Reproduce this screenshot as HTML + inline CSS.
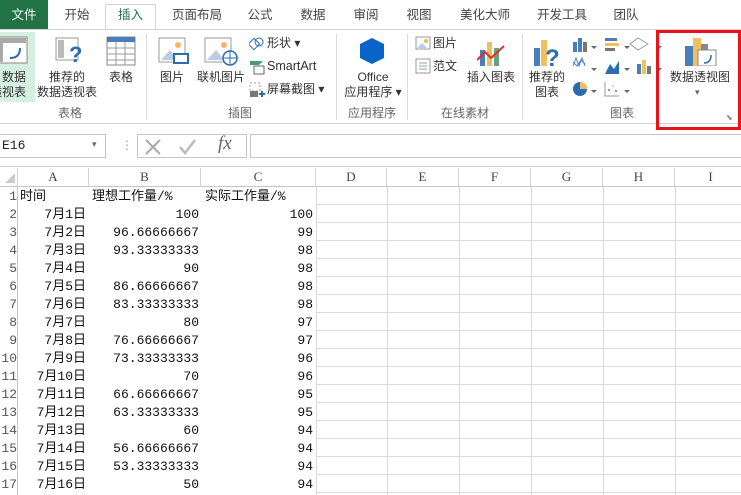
<!DOCTYPE html>
<html><head><meta charset="utf-8"><style>
*{margin:0;padding:0;box-sizing:border-box}
body{width:741px;height:495px;overflow:hidden;background:#fff;font-family:"Liberation Sans","Noto Sans CJK SC",sans-serif;font-size:12px;color:#444;position:relative}
.a{position:absolute}
.tab{position:absolute;top:0;height:29px;line-height:30px;font-size:12.5px;color:#444;text-align:center}
.lbl{position:absolute;font-size:12px;color:#333;text-align:center;line-height:15px;white-space:nowrap}
.grp{position:absolute;top:104px;font-size:12px;color:#666;text-align:center}
.sep{position:absolute;top:34px;width:1px;height:86px;background:#dadada}
.cell{position:absolute;font-family:"Liberation Mono","Noto Sans CJK SC",monospace;font-size:13px;color:#111;height:18px;line-height:18px;white-space:nowrap}
.rh{position:absolute;left:0;width:17px;font-family:"Liberation Mono",monospace;font-size:13px;color:#555;height:18px;line-height:18px;overflow:hidden;text-align:right;direction:rtl}
.ch{position:absolute;top:168px;height:18px;line-height:18px;text-align:center;font-family:"Liberation Serif",serif;font-size:13px;color:#444;border-right:1px solid #d4d4d4}
</style></head><body>
<div class="a" style="left:0;top:0;width:48px;height:29px;background:#217346"></div>
<div class="tab" style="left:0;width:48px;color:#fff">文件</div>
<div class="tab" style="left:52px;width:50px">开始</div>
<div class="a" style="left:105px;top:4px;width:51px;height:26px;border:1px solid #d4d4d4;border-bottom:none;background:#fff"></div>
<div class="tab" style="left:105px;width:51px;color:#217346">插入</div>
<div class="tab" style="left:162px;width:70px">页面布局</div>
<div class="tab" style="left:240px;width:40px">公式</div>
<div class="tab" style="left:292px;width:42px">数据</div>
<div class="tab" style="left:345px;width:42px">审阅</div>
<div class="tab" style="left:398px;width:42px">视图</div>
<div class="tab" style="left:455px;width:60px">美化大师</div>
<div class="tab" style="left:532px;width:60px">开发工具</div>
<div class="tab" style="left:606px;width:40px">团队</div>
<div class="a" style="left:0;top:29px;width:741px;height:1px;background:#d4d4d4"></div>
<div class="a" style="left:0;top:123px;width:741px;height:1px;background:#d4d4d4"></div>
<div class="a" style="left:0;top:32px;width:35px;height:70px;background:#d5efe1"></div>
<svg class="a" style="left:0;top:36px" width="28" height="28"><rect x="-4" y="1" width="31" height="26" fill="#fff" stroke="#888"/><rect x="-3" y="2" width="6" height="24" fill="#aaa"/><rect x="-3" y="2" width="29" height="5" fill="#aaa"/><path d="M10 22 q10 0 10-10" stroke="#2b6cb0" fill="none" stroke-width="2"/></svg>
<div class="lbl" style="left:-10px;top:70px;width:50px;text-align:left;padding-left:12px">数据<br><span style="margin-left:-12px">透视表</span></div>
<svg class="a" style="left:55px;top:36px" width="28" height="30"><rect x="1" y="2" width="22" height="22" fill="#fff" stroke="#999"/><rect x="3" y="4" width="6" height="18" fill="#bbb"/><text x="14" y="26" font-size="22" font-weight="bold" fill="#2b6cb0" font-family="Liberation Sans">?</text></svg>
<div class="lbl" style="left:36px;top:70px;width:62px">推荐的<br>数据透视表</div>
<svg class="a" style="left:106px;top:36px" width="30" height="30"><rect x="1" y="1" width="28" height="28" fill="#fff" stroke="#888"/><rect x="1" y="1" width="28" height="5" fill="#4a7ebb"/><path d="M1 12H29M1 18H29M1 24H29M10 6V29M19 6V29" stroke="#999"/></svg>
<div class="lbl" style="left:104px;top:70px;width:34px">表格</div>
<div class="grp" style="left:40px;width:60px">表格</div>
<div class="sep" style="left:146px"></div>
<svg class="a" style="left:158px;top:36px" width="32" height="30"><rect x="1" y="2" width="26" height="24" fill="#fff" stroke="#999"/><path d="M3 24 L12 14 L20 24Z" fill="#b9cde5"/><circle cx="20" cy="9" r="3" fill="#f0b860"/><rect x="16" y="18" width="14" height="9" fill="#fff" stroke="#2b6cb0" stroke-width="2"/></svg>
<div class="lbl" style="left:155px;top:70px;width:34px">图片</div>
<svg class="a" style="left:204px;top:36px" width="34" height="30"><rect x="1" y="2" width="26" height="24" fill="#fff" stroke="#999"/><path d="M3 24 L12 14 L20 24Z" fill="#b9cde5"/><circle cx="20" cy="9" r="3" fill="#f0b860"/><circle cx="26" cy="22" r="7" fill="#fff" stroke="#2b6cb0" stroke-width="1.5"/><path d="M19 22H33M26 15V29" stroke="#2b6cb0"/></svg>
<div class="lbl" style="left:193px;top:70px;width:56px">联机图片</div>
<svg class="a" style="left:249px;top:36px" width="16" height="14"><rect x="1" y="4" width="8" height="8" fill="none" stroke="#2b6cb0" transform="rotate(45 5 8)"/><circle cx="10" cy="6" r="4" fill="none" stroke="#2b6cb0"/></svg>
<div class="lbl" style="left:267px;top:36px;text-align:left">形状 ▾</div>
<svg class="a" style="left:249px;top:59px" width="16" height="16"><path d="M1 2H14L10 6H1Z" fill="#4a9a7a"/><rect x="5" y="7" width="10" height="8" fill="#fff" stroke="#666"/></svg>
<div class="lbl" style="left:267px;top:59px;text-align:left;font-size:12.5px">SmartArt</div>
<svg class="a" style="left:249px;top:82px" width="16" height="16"><rect x="1" y="1" width="10" height="8" fill="none" stroke="#999" stroke-dasharray="2 2"/><rect x="1" y="9" width="8" height="6" fill="#777"/><path d="M10 12H16M13 9V15" stroke="#2b6cb0" stroke-width="2"/></svg>
<div class="lbl" style="left:267px;top:82px;text-align:left">屏幕截图 ▾</div>
<div class="grp" style="left:220px;width:40px">插图</div>
<div class="sep" style="left:336px"></div>
<svg class="a" style="left:358px;top:36px" width="28" height="30"><path d="M14 2 L26 8 V22 L14 28 L2 22 V8Z" fill="#0a64c8"/></svg>
<div class="lbl" style="left:340px;top:70px;width:66px">Office<br>应用程序 ▾</div>
<div class="grp" style="left:340px;width:64px">应用程序</div>
<div class="sep" style="left:407px"></div>
<svg class="a" style="left:415px;top:36px" width="16" height="14"><rect x="1" y="1" width="14" height="12" fill="#fff" stroke="#999"/><path d="M2 12 L7 7 L12 12Z" fill="#b9cde5"/><circle cx="11" cy="5" r="2" fill="#f0b860"/></svg>
<div class="lbl" style="left:433px;top:36px;text-align:left">图片</div>
<svg class="a" style="left:415px;top:58px" width="16" height="16"><rect x="1" y="1" width="14" height="14" fill="#fff" stroke="#999"/><path d="M4 5H12M4 8H12M4 11H12" stroke="#8aa"/></svg>
<div class="lbl" style="left:433px;top:59px;text-align:left">范文</div>
<svg class="a" style="left:477px;top:40px" width="28" height="26"><rect x="3" y="10" width="5" height="16" fill="#4a7ebb"/><rect x="10" y="2" width="5" height="24" fill="#f0c060"/><rect x="17" y="8" width="5" height="18" fill="#6aa080"/><path d="M0 20 L8 12 L14 18 L27 6" stroke="#e03020" stroke-width="2" fill="none"/></svg>
<div class="lbl" style="left:462px;top:70px;width:58px">插入图表</div>
<div class="grp" style="left:435px;width:60px">在线素材</div>
<div class="sep" style="left:522px"></div>
<svg class="a" style="left:533px;top:38px" width="30" height="30"><rect x="1" y="10" width="6" height="18" fill="#4a7ebb"/><rect x="8" y="2" width="6" height="26" fill="#f0c060"/><text x="12" y="28" font-size="24" font-weight="bold" fill="#2b6cb0" font-family="Liberation Sans">?</text></svg>
<div class="lbl" style="left:527px;top:70px;width:40px">推荐的<br>图表</div>
<svg class="a" style="left:572px;top:36px" width="90" height="62">
<rect x="1" y="6" width="4" height="10" fill="#4a7ebb"/><rect x="6" y="2" width="4" height="14" fill="#4a7ebb"/><rect x="11" y="6" width="4" height="10" fill="#777"/>
<path d="M19 10l3 3 3-3z" fill="#666"/>
<rect x="33" y="2" width="12" height="3" fill="#4a7ebb"/><rect x="33" y="7" width="14" height="3" fill="#f0c060"/><rect x="33" y="12" width="10" height="3" fill="#777"/>
<path d="M52 10l3 3 3-3z" fill="#666"/>
<path d="M66 2l10 6-10 6-8-6z" fill="none" stroke="#999"/><path d="M84 10l3 3 3-3z" fill="#666"/>
<path d="M1 30l3-8 3 8 3-8 3 8" stroke="#4a7ebb" fill="none"/><path d="M1 26l4 4 4-6 4 4" stroke="#4a7ebb" fill="none"/>
<path d="M19 32l3 3 3-3z" fill="#666"/>
<path d="M33 38l5-10 4 5 5-8 V38Z" fill="#2b6cb0"/><path d="M52 32l3 3 3-3z" fill="#666"/>
<rect x="65" y="28" width="4" height="10" fill="#4a7ebb"/><rect x="70" y="24" width="4" height="14" fill="#f0c060"/><rect x="75" y="30" width="4" height="8" fill="#777"/><path d="M84 32l3 3 3-3z" fill="#666"/>
<circle cx="8" cy="53" r="7" fill="#2b6cb0"/><path d="M8 53V46A7 7 0 0 1 15 53Z" fill="#f0c060"/><path d="M19 54l3 3 3-3z" fill="#666"/>
<path d="M33 46V60H47" stroke="#999" fill="none"/><circle cx="37" cy="54" r="1" fill="#4a7ebb"/><circle cx="41" cy="50" r="1" fill="#f0c060"/><circle cx="44" cy="55" r="1" fill="#4a7ebb"/><path d="M52 54l3 3 3-3z" fill="#666"/>
</svg>
<div class="grp" style="left:602px;width:40px">图表</div>
<svg class="a" style="left:684px;top:36px" width="34" height="30"><rect x="1" y="10" width="8" height="20" fill="#4a7ebb"/><rect x="9" y="2" width="8" height="28" fill="#f0c060"/><rect x="17" y="8" width="7" height="8" fill="#888"/><rect x="14" y="14" width="18" height="16" fill="#fff" stroke="#888"/><path d="M20 27q7 0 7-8" stroke="#2b6cb0" fill="none" stroke-width="1.5"/></svg>
<div class="lbl" style="left:664px;top:70px;width:72px">数据透视图</div>
<div class="lbl" style="left:695px;top:85px;font-size:9px;color:#666">▾</div>
<div class="lbl" style="left:726px;top:110px;font-size:8px;color:#888">⬊</div>
<div class="a" style="left:656px;top:30px;width:85px;height:100px;border:3px solid #e8141a"></div>
<div class="a" style="left:0;top:134px;width:106px;height:24px;border:1px solid #c6c6c6;border-left:none"></div>
<div class="a" style="left:2px;top:138px;font-family:'Liberation Mono',monospace;font-size:13px;color:#222">E16</div>
<div class="a" style="left:92px;top:139px;font-size:9px;color:#666">▾</div>
<div class="a" style="left:121px;top:138px;color:#999">⋮</div>
<div class="a" style="left:137px;top:134px;width:110px;height:24px;border:1px solid #c6c6c6"></div>
<svg class="a" style="left:144px;top:138px" width="70" height="18"><path d="M2 2L16 16M16 2L2 16" stroke="#aaa" stroke-width="2"/><path d="M36 9l5 6 10-13" stroke="#bbb" stroke-width="2.5" fill="none"/></svg>
<div class="a" style="left:218px;top:133px;font-size:19px;color:#666;font-family:'Liberation Serif',serif;font-style:italic">fx</div>
<div class="a" style="left:250px;top:134px;width:491px;height:24px;border:1px solid #c6c6c6;border-right:none"></div>
<div class="a" style="left:0;top:166px;width:741px;height:1px;background:#d4d4d4"></div>
<div class="a" style="left:0;top:167px;width:741px;height:20px;background:#fff;border-bottom:1px solid #c6c6c6"></div>
<svg class="a" style="left:4px;top:172px" width="12" height="12"><path d="M11 1V11H1Z" fill="#ccc"/></svg>
<div class="ch" style="left:17px;width:72px;border-left:1px solid #d4d4d4">A</div>
<div class="ch" style="left:89px;width:112px">B</div>
<div class="ch" style="left:201px;width:115px">C</div>
<div class="ch" style="left:316px;width:71px">D</div>
<div class="ch" style="left:387px;width:72px">E</div>
<div class="ch" style="left:459px;width:72px">F</div>
<div class="ch" style="left:531px;width:72px">G</div>
<div class="ch" style="left:603px;width:72px">H</div>
<div class="ch" style="left:675px;width:72px">I</div>
<svg class="a" style="left:0;top:187px" width="741" height="308">
<g stroke="#dadada" stroke-width="1">
<path d="M316.5 0V308M387.5 0V308M459.5 0V308M531.5 0V308M603.5 0V308M675.5 0V308"/>
<path d="M316 17.5H741M316 35.5H741M316 53.5H741M316 71.5H741M316 89.5H741M316 107.5H741M316 125.5H741M316 143.5H741M316 161.5H741M316 179.5H741M316 197.5H741M316 215.5H741M316 233.5H741M316 251.5H741M316 269.5H741M316 287.5H741M316 305.5H741"/>
</g>
<path d="M17.5 0V308" stroke="#c6c6c6"/>
</svg>
<div id="rows"></div>
<script>
var d=[["时间","理想工作量/%","实际工作量/%"],["7月1日","100","100"],["7月2日","96.66666667","99"],["7月3日","93.33333333","98"],["7月4日","90","98"],["7月5日","86.66666667","98"],["7月6日","83.33333333","98"],["7月7日","80","97"],["7月8日","76.66666667","97"],["7月9日","73.33333333","96"],["7月10日","70","96"],["7月11日","66.66666667","95"],["7月12日","63.33333333","95"],["7月13日","60","94"],["7月14日","56.66666667","94"],["7月15日","53.33333333","94"],["7月16日","50","94"]];
var h="";
for(var i=0;i<d.length;i++){var y=188+i*18;
h+='<div class="rh" style="top:'+y+'px">'+(i+1)+'</div>';
if(i==0){h+='<div class="cell" style="left:20px;top:'+y+'px">'+d[i][0]+'</div><div class="cell" style="left:92px;top:'+y+'px">'+d[i][1]+'</div><div class="cell" style="left:205px;top:'+y+'px">'+d[i][2]+'</div>';}
else{h+='<div class="cell" style="left:17px;width:69px;text-align:right;top:'+y+'px">'+d[i][0]+'</div><div class="cell" style="left:89px;width:110px;text-align:right;top:'+y+'px">'+d[i][1]+'</div><div class="cell" style="left:201px;width:112px;text-align:right;top:'+y+'px">'+d[i][2]+'</div>';}}
document.getElementById("rows").innerHTML=h;
</script>
</body></html>
